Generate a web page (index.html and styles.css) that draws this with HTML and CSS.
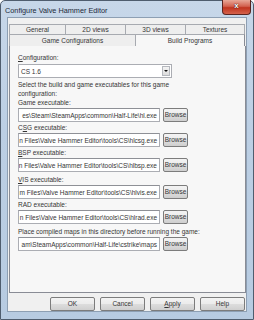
FILE: index.html
```html
<!DOCTYPE html>
<html>
<head>
    <title>Configure Valve Hammer Editor</title>
    <link rel="stylesheet" href="styles.css">
</head>
<body>
    <div class="window">
        <div class="titlebar">
            <span class="title">Configure Valve Hammer Editor</span>
            <div class="close">x</div>
        </div>

        <div class="client">
            <div class="tab-row back">
                <div class="tab t1">General</div>
                <div class="tab">2D views</div>
                <div class="tab">3D views</div>
                <div class="tab">Textures</div>
            </div>
            <div class="tab-row front">
                <div class="tab t-game">Game Configurations</div>
                <div class="tab active">Build Programs</div>
            </div>

            <div class="panel">
                <div class="label"><u>C</u>onfiguration:</div>
                <div class="select">
                    <span class="select-text">CS 1.6</span>
                    <span class="arrow"></span>
                </div>

                <p class="note">Select the build and game executables for this game configuration:</p>

                <div class="field">
                    <div class="label">Game executable:</div>
                    <div class="row">
                        <div class="input"><span>es\Steam\SteamApps\common\Half-Life\hl.exe</span></div>
                        <div class="btn browse">Browse</div>
                    </div>
                </div>
                <div class="field">
                    <div class="label">C<u>S</u>G executable:</div>
                    <div class="row">
                        <div class="input"><span>n Files\Valve Hammer Editor\tools\CS\hlcsg.exe</span></div>
                        <div class="btn browse">Browse</div>
                    </div>
                </div>
                <div class="field">
                    <div class="label"><u>B</u>SP executable:</div>
                    <div class="row">
                        <div class="input"><span>n Files\Valve Hammer Editor\tools\CS\hlbsp.exe</span></div>
                        <div class="btn browse">Browse</div>
                    </div>
                </div>
                <div class="field spaced">
                    <div class="label"><u>V</u>IS executable:</div>
                    <div class="row">
                        <div class="input"><span>m Files\Valve Hammer Editor\tools\CS\hlvis.exe</span></div>
                        <div class="btn browse">Browse</div>
                    </div>
                </div>
                <div class="field">
                    <div class="label">RAD executable:</div>
                    <div class="row">
                        <div class="input"><span>n Files\Valve Hammer Editor\tools\CS\hlrad.exe</span></div>
                        <div class="btn browse">Browse</div>
                    </div>
                </div>
                <div class="field spaced">
                    <div class="label">Place compiled maps in this directory before running the game:</div>
                    <div class="row">
                        <div class="input"><span>am\SteamApps\common\Half-Life\cstrike\maps</span></div>
                        <div class="btn browse">Browse</div>
                    </div>
                </div>
            </div>

            <div class="buttons">
                <div class="btn">OK</div>
                <div class="btn">Cancel</div>
                <div class="btn"><u>A</u>pply</div>
                <div class="btn">Help</div>
            </div>
        </div>
    </div>
</body>
</html>
```

FILE: styles.css
```css
* {
    box-sizing: border-box;
}

body {
    margin: 0;
    font-family: "Liberation Sans", Arial, sans-serif;
    font-size: 6.5px;
    color: #353535;
}

.window {
    width: 254px;
    height: 320px;
    display: flex;
    flex-direction: column;
    padding: 0 6px 7px 6px;
    border: 1px solid #4f5d6e;
    border-radius: 5px 5px 0 0;
    background: linear-gradient(#c7d7e9, #bccfe4 40%, #b7cbe1);
}

.titlebar {
    height: 16px;
    display: flex;
    justify-content: space-between;
    align-items: flex-start;
}

.title {
    font-size: 7.3px;
    color: #1c2a3a;
    padding-top: 5px;
    margin-left: -2px;
}

.close {
    width: 29px;
    height: 15px;
    margin: -1px -4px 0 0;
    border: 1px solid #5a2420;
    border-top: none;
    border-radius: 0 0 4px 4px;
    background: linear-gradient(#e8a898, #d2614f 45%, #c0341f 55%, #d4624c);
    color: #fff;
    font-weight: bold;
    font-size: 8px;
    text-align: center;
    line-height: 12px;
    text-shadow: 0 0 1px #3a0e08, 0 0 1px #3a0e08;
}

.client {
    flex: 1;
    border: 1px solid #8d9fb3;
    background: #f0f0f0;
    padding: 6px 1px 0 1px;
    display: flex;
    flex-direction: column;
}

.tab-row {
    display: flex;
}

.tab {
    border: 1px solid #a7aab0;
    border-bottom: none;
    border-right: none;
    text-align: center;
    background: #eeeeee;
}

.back .tab {
    width: 60px;
    height: 10px;
    line-height: 9px;
}

.back .t1 {
    width: 56px;
}

.back .tab:last-child {
    border-right: 1px solid #a7aab0;
}

.front .tab {
    height: 12px;
    line-height: 11px;
}

.t-game {
    width: 126px;
}

.tab.active {
    width: 110px;
    border-right: 1px solid #898c95;
    background: #f7f7f7;
}

.panel {
    height: 247px;
    width: 237px;
    border: 1px solid #898c95;
    border-top: none;
    background: #f7f7f7;
    padding: 7px 0 0 8px;
}

.label {
    height: 10px;
    line-height: 10px;
    white-space: nowrap;
}

.panel > .label {
    margin-bottom: 1px;
}

.select {
    width: 154px;
    height: 14px;
    border: 1px solid #abadb3;
    background: #fff;
    display: flex;
    justify-content: space-between;
    align-items: center;
    padding: 0 1px 0 2px;
}

.arrow {
    width: 8px;
    height: 10px;
    border: 1px solid #b5b8be;
    background: linear-gradient(#f4f4f4, #dcdcdc);
    position: relative;
}

.arrow::after {
    content: "";
    position: absolute;
    left: 1px;
    top: 3px;
    border-left: 2px solid transparent;
    border-right: 2px solid transparent;
    border-top: 2px solid #111;
}

.note {
    margin: 2px 0 0 0;
    width: 165px;
    line-height: 9px;
    height: 18px;
}

.field {
    margin-bottom: 1px;
}

.field.spaced {
    margin-top: 3px;
}

.row {
    display: flex;
    gap: 3px;
}

.input {
    width: 142px;
    height: 14px;
    border: 1px solid #abadb3;
    border-top-color: #8e9096;
    background: #fff;
    display: flex;
    justify-content: flex-end;
    align-items: center;
    overflow: hidden;
    white-space: nowrap;
    padding-right: 2px;
}

.btn {
    height: 14px;
    border: 1px solid #7c7c7c;
    border-radius: 2px;
    background: linear-gradient(#f3f3f3, #ebebeb 50%, #dddddd 50%, #cfcfcf);
    text-align: center;
    line-height: 12px;
}

.browse {
    width: 25px;
}

.buttons {
    display: flex;
    justify-content: flex-end;
    gap: 5px;
    margin-top: 4px;
}

.buttons .btn {
    width: 45px;
}
```
